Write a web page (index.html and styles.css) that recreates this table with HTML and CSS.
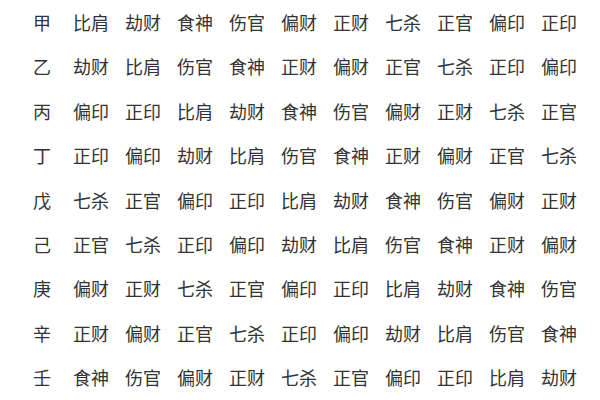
FILE: index.html
```html
<!DOCTYPE html>
<html lang="zh">
<head>
<meta charset="utf-8">
<link rel="stylesheet" href="styles.css">
</head>
<body>
<div class="table">
  <div class="row"><span class="stem">甲</span><span>比肩</span><span>劫财</span><span>食神</span><span>伤官</span><span>偏财</span><span>正财</span><span>七杀</span><span>正官</span><span>偏印</span><span>正印</span></div>
  <div class="row"><span class="stem">乙</span><span>劫财</span><span>比肩</span><span>伤官</span><span>食神</span><span>正财</span><span>偏财</span><span>正官</span><span>七杀</span><span>正印</span><span>偏印</span></div>
  <div class="row"><span class="stem">丙</span><span>偏印</span><span>正印</span><span>比肩</span><span>劫财</span><span>食神</span><span>伤官</span><span>偏财</span><span>正财</span><span>七杀</span><span>正官</span></div>
  <div class="row"><span class="stem">丁</span><span>正印</span><span>偏印</span><span>劫财</span><span>比肩</span><span>伤官</span><span>食神</span><span>正财</span><span>偏财</span><span>正官</span><span>七杀</span></div>
  <div class="row"><span class="stem">戊</span><span>七杀</span><span>正官</span><span>偏印</span><span>正印</span><span>比肩</span><span>劫财</span><span>食神</span><span>伤官</span><span>偏财</span><span>正财</span></div>
  <div class="row"><span class="stem">己</span><span>正官</span><span>七杀</span><span>正印</span><span>偏印</span><span>劫财</span><span>比肩</span><span>伤官</span><span>食神</span><span>正财</span><span>偏财</span></div>
  <div class="row"><span class="stem">庚</span><span>偏财</span><span>正财</span><span>七杀</span><span>正官</span><span>偏印</span><span>正印</span><span>比肩</span><span>劫财</span><span>食神</span><span>伤官</span></div>
  <div class="row"><span class="stem">辛</span><span>正财</span><span>偏财</span><span>正官</span><span>七杀</span><span>正印</span><span>偏印</span><span>劫财</span><span>比肩</span><span>伤官</span><span>食神</span></div>
  <div class="row"><span class="stem">壬</span><span>食神</span><span>伤官</span><span>偏财</span><span>正财</span><span>七杀</span><span>正官</span><span>偏印</span><span>正印</span><span>比肩</span><span>劫财</span></div>
</div>
</body>
</html>
```
FILE: styles.css
```css
html, body {
  margin: 0;
  padding: 0;
  background: #ffffff;
}
body {
  width: 600px;
  height: 400px;
  overflow: hidden;
  font-family: "Noto Sans CJK SC", sans-serif;
  color: #333333;
}
.table {
  padding-left: 33px;
}
.row {
  display: grid;
  grid-template-columns: 40px repeat(10, 52px);
  height: 44.4px;
  line-height: 44.4px;
  font-size: 18px;
  white-space: nowrap;
}
.row span {
  display: block;
}
```
